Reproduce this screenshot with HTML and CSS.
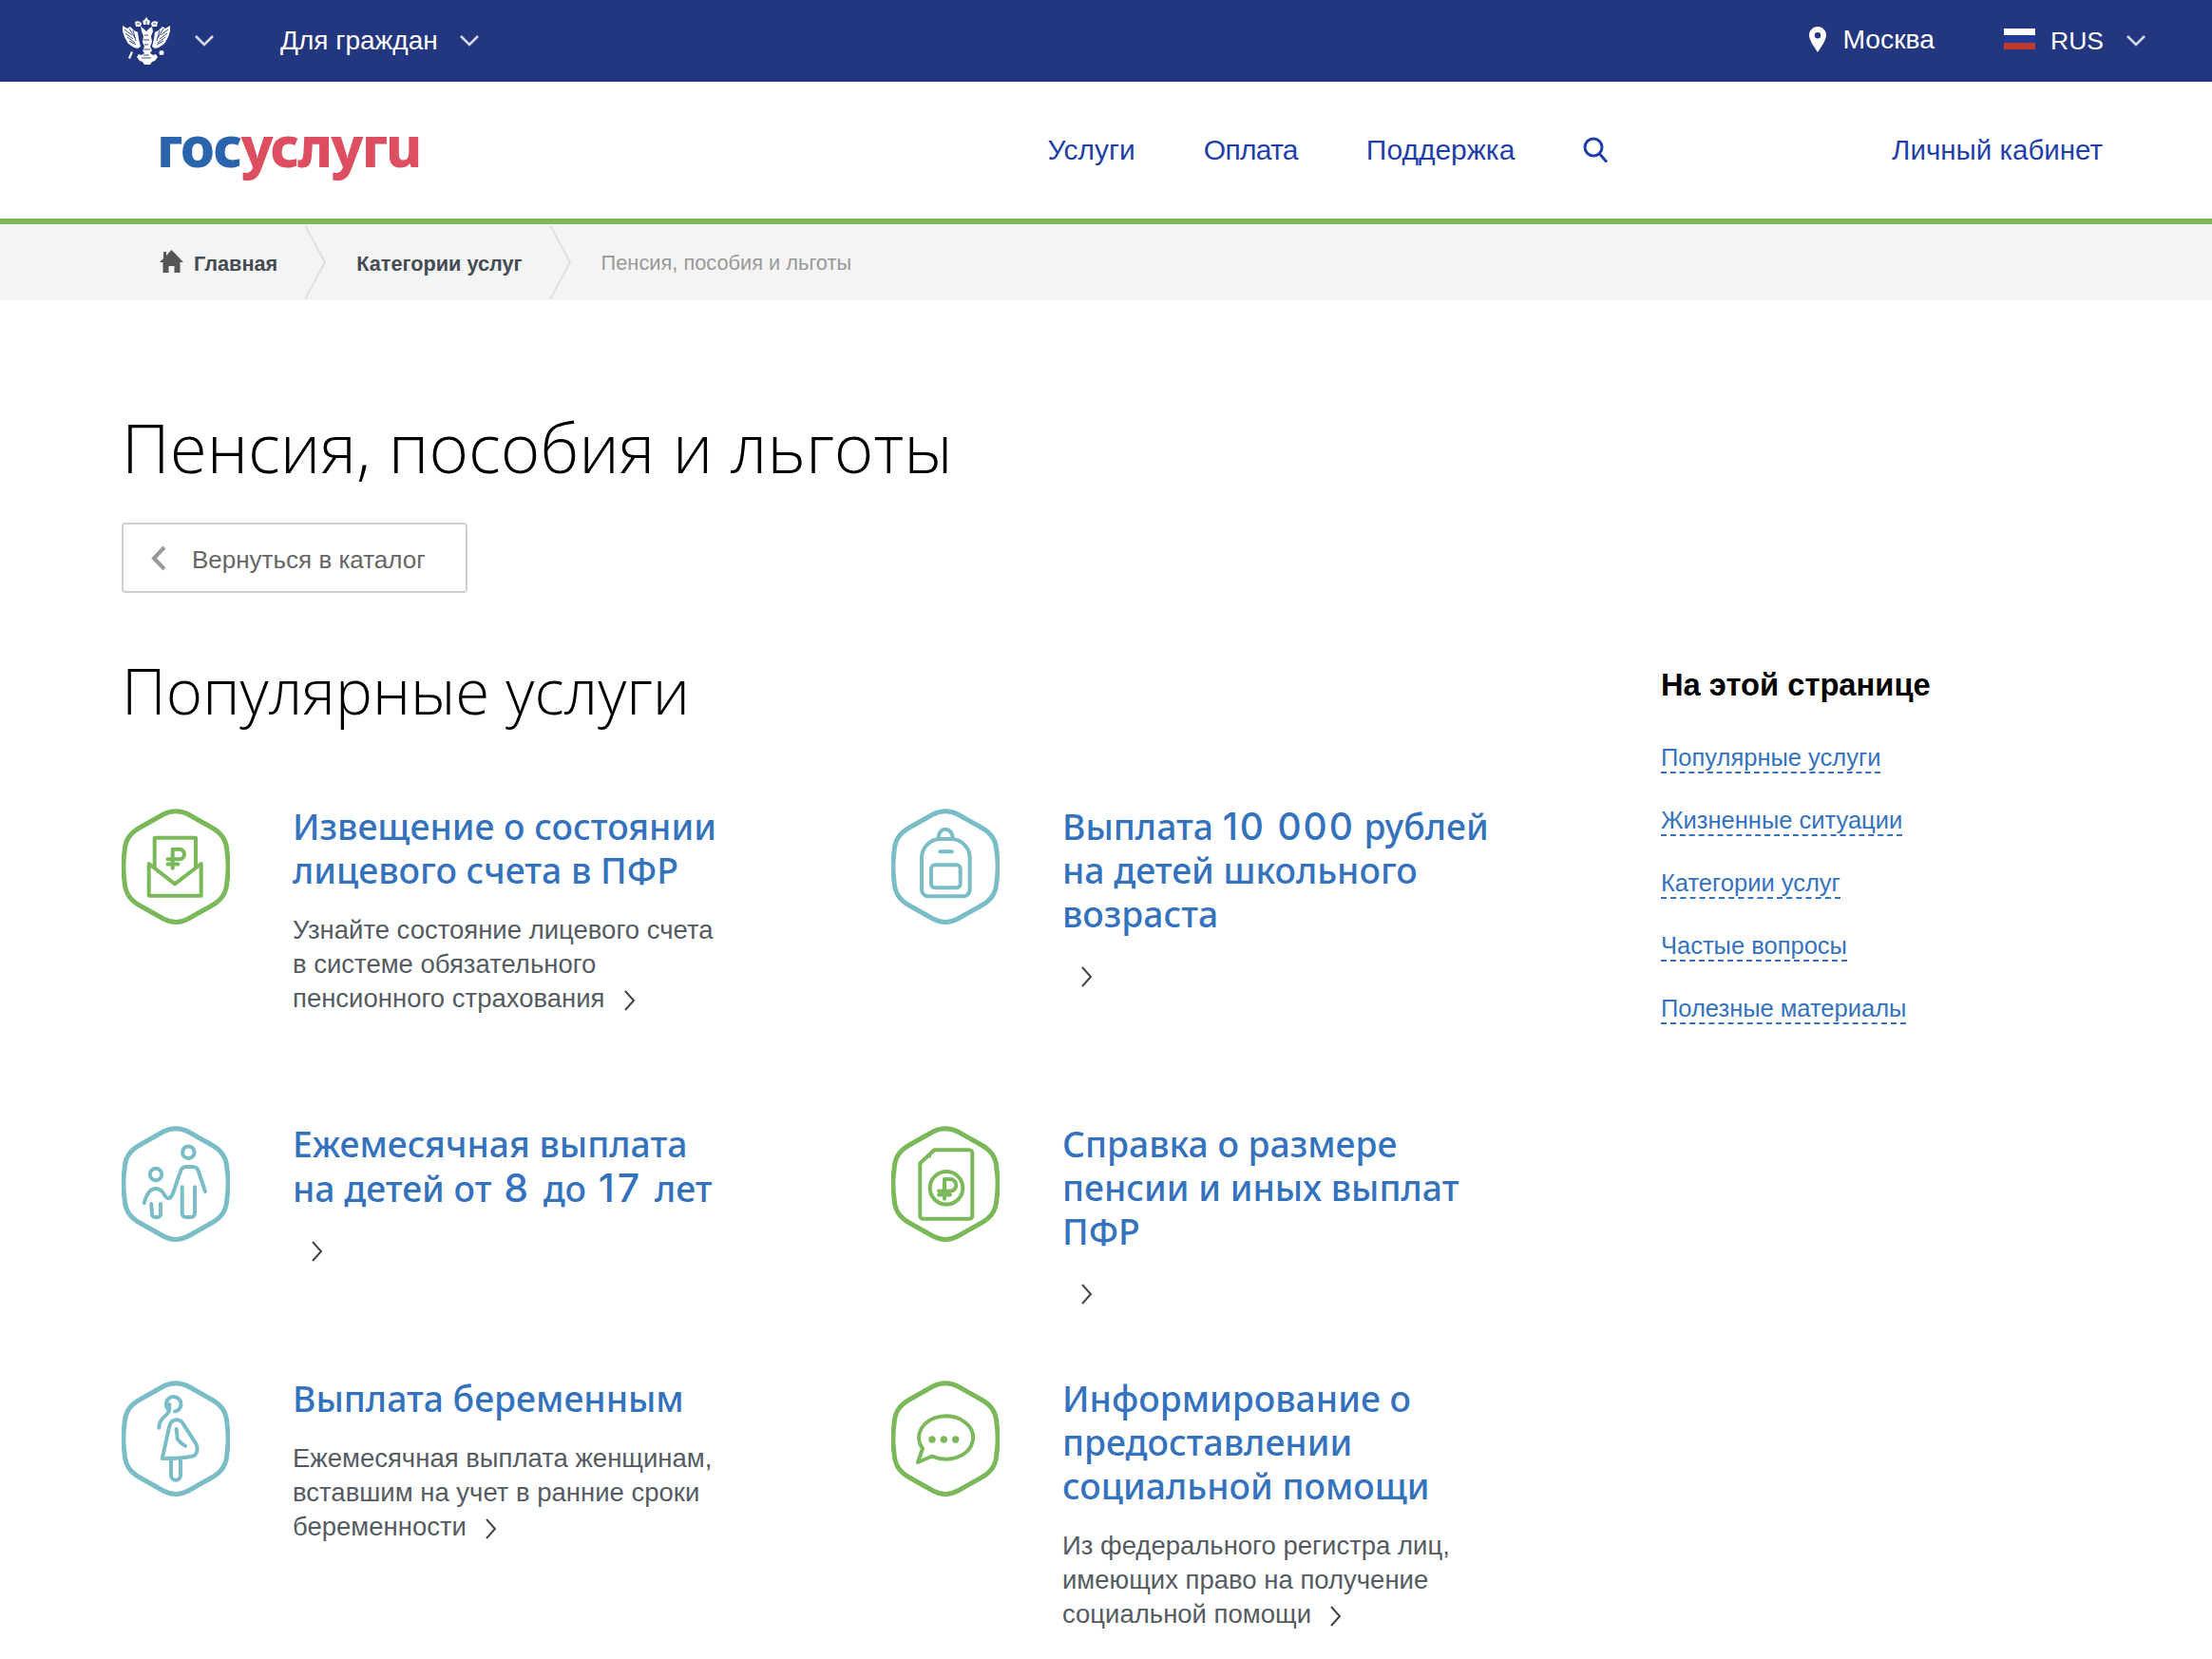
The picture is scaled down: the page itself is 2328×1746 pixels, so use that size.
FILE: index.html
```html
<!DOCTYPE html>
<html lang="ru">
<head>
<meta charset="utf-8">
<title>Пенсия, пособия и льготы</title>
<link rel="stylesheet" href="styles.css">
</head>
<body>
<svg class="defs" width="0" height="0" aria-hidden="true">
  <defs>
    <path id="hex" d="M44 6C52 1.500 62 1.500 70 6L94 19.500C106 26 110.500 34 111 46C112.500 56 112.500 66 111 76C110.500 88 106 96 94 102.500L70 116C62 120.500 52 120.500 44 116L20 102.500C8 96 3.500 88 3 76C1.500 66 1.500 56 3 46C3.500 34 8 26 20 19.500Z"/>
    <path id="chev" d="M2 2L11 12L2 22"/>
  </defs>
</svg>

<header class="topbar">
  <svg class="crest" viewBox="0 0 52 50" aria-label="Герб">
    <g fill="#fff">
      <path d="M26 0l2 3 2 1-1 4h-6l-1-4 2-1z"/>
      <path d="M14 5c3-1.500 6-.5 7 2l-1 3h-5zM38 5c-3-1.500-6-.5-7 2l1 3h5z"/>
      <path d="M1 9l5 3 3-2 4 4 4 2 1 7 2 8-3 2-4-1-6-4-4-7-2-6z"/>
      <path d="M51 9l-5 3-3-2-4 4-4 2-1 7-2 8 3 2 4-1 6-4 4-7 2-6z"/>
      <path d="M20 10l3 2 3 3 3-3 3-2 1 5-2 5 1 6-2 5 2 4-2 3 3 2 3-1 2 3-3 4-3 1-2 3h-6l-2-3-3-1-3-4 2-3 3 1 3-2-2-3 2-4-2-5 1-6-2-5z"/>
      <path d="M10 36l2 1-3 7-2-1zM42 35a2.500 2.500 0 1 1 0 5a2.500 2.500 0 1 1 0-5z"/>
    </g>
    <g fill="none" stroke="#233780" stroke-width=".9">
      <path d="M3 13l8 6M4 17l8 6M6 21l8 6M8 25l7 4M8 12l6 10M12 14l3 11"/>
      <path d="M49 13l-8 6M48 17l-8 6M46 21l-8 6M44 25l-7 4M44 12l-6 10M40 14l-3 11"/>
      <path d="M24 19h4M23 24h6M24 29h4M23 40h6M21 43h10M22 34h8"/>
      <path d="M26 4v4M16 7h3M33 7h3"/>
    </g>
  </svg>
  <svg class="chevron-down" viewBox="0 0 20 12"><path d="M1 1l9 9 9-9"/></svg>
  <a class="topbar-link citizens">Для граждан</a>
  <svg class="chevron-down" viewBox="0 0 20 12"><path d="M1 1l9 9 9-9"/></svg>
  <div class="topbar-right">
    <svg class="pin" viewBox="0 0 18 27"><path fill-rule="evenodd" d="M9 0c5 0 9 4 9 9 0 5-5 12-9 18C5 21 0 14 0 9c0-5 4-9 9-9zm0 6a3.200 3.200 0 1 0 0 6.400A3.200 3.200 0 0 0 9 6z"/></svg>
    <a class="topbar-link city">Москва</a>
    <span class="flag"><i class="flag-w"></i><i class="flag-b"></i><i class="flag-r"></i></span>
    <a class="topbar-link lang">RUS</a>
    <svg class="chevron-down" viewBox="0 0 20 12"><path d="M1 1l9 9 9-9"/></svg>
  </div>
</header>

<div class="mainhead">
  <a class="logo"><span class="logo-blue">гос</span><span class="logo-red">услугu</span></a>
  <nav class="mainnav">
    <a>Услуги</a>
    <a class="nav-pay">Оплата</a>
    <a>Поддержка</a>
    <svg class="search" viewBox="0 0 27 28"><circle cx="11" cy="11" r="9"/><path d="M17.500 18L25 26.500"/></svg>
  </nav>
  <a class="cabinet">Личный кабинет</a>
</div>

<nav class="crumbs">
  <svg class="home" viewBox="0 0 25 24"><path d="M12.500 0L25 13h-3.500v11h-6v-7h-6v7h-6V13H0L4 9V2h3v4z"/></svg>
  <a class="crumb">Главная</a>
  <svg class="crumb-sep" viewBox="0 0 24 78"><path d="M1 0l21 39L1 78"/></svg>
  <a class="crumb">Категории услуг</a>
  <svg class="crumb-sep" viewBox="0 0 24 78"><path d="M1 0l21 39L1 78"/></svg>
  <span class="crumb-current">Пенсия, пособия и льготы</span>
</nav>

<main class="page">
  <h1 class="page-title">Пенсия, пособия и льготы</h1>
  <a class="back"><svg class="back-arrow" viewBox="0 0 18 27"><path d="M15 2L4 13.500 15 25"/></svg><span>Вернуться в каталог</span></a>

  <div class="content">
    <section class="services">
      <h2 class="section-title">Популярные услуги</h2>
      <div class="cards">

        <article class="card">
          <svg class="ico green" viewBox="0 0 114 122">
            <use href="#hex"/>
            <path d="M34.700 62V30.700H78V62"/>
            <path d="M28.700 58v33.700h55V58L56 79.300z"/>
            <path d="M53.700 62.700V42.700h7a5.300 5.300 0 0 1 0 10.600H48.500M48.500 58.500h11"/>
          </svg>
          <div class="card-body">
            <h3 class="card-title">Извещение о состоянии<br>лицевого счета в ПФР</h3>
            <p class="card-text">Узнайте состояние лицевого счета<br>в системе обязательного<br>пенсионного страхования<svg class="more" viewBox="0 0 13 24"><use href="#chev"/></svg></p>
          </div>
        </article>

        <article class="card">
          <svg class="ico teal" viewBox="0 0 114 122">
            <use href="#hex"/>
            <path d="M32 85V52a20 20 0 0 1 20-20h10.700a20 20 0 0 1 20 20v33a7 7 0 0 1-7 7.300H39a7 7 0 0 1-7-7.300z"/>
            <path d="M49.300 31.700C50 25 53 21.700 57 21.700s7 3.300 8.300 10"/>
            <path d="M51.300 45.300h12.400"/>
            <rect x="42" y="59.300" width="30.700" height="24" rx="4"/>
          </svg>
          <div class="card-body">
            <h3 class="card-title">Выплата <span class="num">10 000</span> рублей<br>на детей школьного<br>возраста</h3>
            <p class="card-more"><svg class="more" viewBox="0 0 13 24"><use href="#chev"/></svg></p>
          </div>
        </article>

        <article class="card">
          <svg class="ico teal" viewBox="0 0 114 122">
            <use href="#hex"/>
            <circle cx="70.300" cy="27.700" r="6.300"/>
            <circle cx="36" cy="51" r="6.300"/>
            <path d="M23.700 81C26 72 30 66 36 66c5 0 8 4 10 8 2 3 5 3 7-1 3-6 6-18 9-25 1-4 3-5 6-5h7c3 0 5 2 6 5l7 21"/>
            <path d="M63.700 64.300V92a4 4 0 0 0 4 4h5.300a4 4 0 0 0 4-4V64.300"/>
            <path d="M31.300 82l.7 11a3 3 0 0 0 3 3h3a3 3 0 0 0 3-3V82"/>
          </svg>
          <div class="card-body">
            <h3 class="card-title">Ежемесячная выплата<br>на детей от <span class="num-short">8</span> до <span class="num-short">17</span> лет</h3>
            <p class="card-more"><svg class="more" viewBox="0 0 13 24"><use href="#chev"/></svg></p>
          </div>
        </article>

        <article class="card">
          <svg class="ico green" viewBox="0 0 114 122">
            <use href="#hex"/>
            <path d="M45.300 25.300H82a3.300 3.300 0 0 1 3.300 3.300v65.800a3.300 3.300 0 0 1-3.300 3.300H33.600a3.300 3.300 0 0 1-3.300-3.300V39.300z"/>
            <path class="solid" d="M39 33.500l3-3v3z"/>
            <circle cx="58" cy="65.300" r="17.300"/>
            <path d="M56 76.700V56h6a6.300 6.300 0 0 1 0 12.600H50M50 72.500h12"/>
          </svg>
          <div class="card-body">
            <h3 class="card-title">Справка о размере<br>пенсии и иных выплат<br>ПФР</h3>
            <p class="card-more"><svg class="more" viewBox="0 0 13 24"><use href="#chev"/></svg></p>
          </div>
        </article>

        <article class="card">
          <svg class="ico teal" viewBox="0 0 114 122">
            <use href="#hex"/>
            <path d="M50.300 31.300A7.800 7.800 0 1 1 56 32.500"/>
            <path d="M50.300 25C50.500 31 50 34 46 37c-4 3-6.500 6-6.700 12.700"/>
            <path d="M42.700 82L50.300 48c1-4 4-6.700 7.700-6.700 3.300 0 5.600 1.700 7.300 5L78 66c3.500 6 .5 13.700-4.300 13.700C63 82 52 82 42.700 82z"/>
            <path d="M52 83v16.700a5 5 0 0 0 10 0V83"/>
            <path d="M57.700 50.700l1 10.600c2 3 5 5.700 8.300 7.400"/>
          </svg>
          <div class="card-body">
            <h3 class="card-title">Выплата беременным</h3>
            <p class="card-text">Ежемесячная выплата женщинам,<br>вставшим на учет в ранние сроки<br>беременности<svg class="more" viewBox="0 0 13 24"><use href="#chev"/></svg></p>
          </div>
        </article>

        <article class="card">
          <svg class="ico green" viewBox="0 0 114 122">
            <use href="#hex"/>
            <path d="M43 79.500A28.500 22.700 0 1 0 33 71.500L28 86z"/>
            <circle class="solid" cx="43" cy="62" r="3.700"/>
            <circle class="solid" cx="55.300" cy="62" r="3.700"/>
            <circle class="solid" cx="67.700" cy="62" r="3.700"/>
          </svg>
          <div class="card-body">
            <h3 class="card-title">Информирование о<br>предоставлении<br>социальной помощи</h3>
            <p class="card-text">Из федерального регистра лиц,<br>имеющих право на получение<br>социальной помощи<svg class="more" viewBox="0 0 13 24"><use href="#chev"/></svg></p>
          </div>
        </article>

      </div>
    </section>

    <aside class="toc">
      <h4 class="toc-title">На этой странице</h4>
      <a class="toc-link">Популярные услуги</a>
      <a class="toc-link">Жизненные ситуации</a>
      <a class="toc-link">Категории услуг</a>
      <a class="toc-link">Частые вопросы</a>
      <a class="toc-link">Полезные материалы</a>
    </aside>
  </div>
</main>
</body>
</html>
```

FILE: styles.css
```css
* { box-sizing: border-box; }
html, body { margin: 0; padding: 0; }
body {
  width: 2328px;
  height: 1746px;
  overflow: hidden;
  background: #fff;
  font-family: "Liberation Sans", Arial, sans-serif;
  color: #000;
}
.defs { position: absolute; }

.topbar {
  height: 86px;
  background: #233780;
  display: flex;
  align-items: center;
  padding: 0 70px 0 128px;
}
.crest { width: 52px; height: 50px; flex: none; margin-right: 25px; }
.chevron-down { width: 20px; height: 12px; flex: none; }
.chevron-down path { fill: none; stroke: #d5daea; stroke-width: 2.500; }
.topbar-link { color: #fff; font-size: 28px; }
.citizens { margin-left: 70px; margin-right: 23px; }
.topbar-right { margin-left: auto; display: flex; align-items: center; }
.pin { width: 18px; height: 27px; fill: #fff; margin-right: 17px; margin-top: -4px; }
.city { margin-right: 73px; margin-top: -4px; font-size: 28.300px; }
.flag { width: 33px; height: 22px; display: flex; flex-direction: column; margin-right: 16px; margin-top: -4px; }
.flag i { flex: 1; display: block; }
.flag-w { background: #fff; }
.flag-b { background: #1f3b9c; }
.flag-r { background: #c23b2a; }
.lang { margin-right: 24px; font-size: 26.500px; }

.mainhead {
  height: 144px;
  display: flex;
  align-items: center;
  padding: 0 115px 0 165px;
}
.logo {
  font-family: "Noto Sans", sans-serif;
  font-weight: 800;
  font-size: 58px;
  letter-spacing: -1.700px;
  line-height: 1;
  white-space: nowrap;
  margin-top: -8px;
}
.logo-blue { color: #2a64ad; }
.logo-red { color: #dd4f60; }
.mainnav { margin-left: 660px; display: flex; align-items: center; gap: 72px; }
.mainnav a { color: #1f3fa8; font-size: 30px; }
.mainnav .nav-pay { letter-spacing: -.7px; }
.search { width: 27px; height: 28px; fill: none; stroke: #1f3fa8; stroke-width: 3; }
.cabinet { margin-left: auto; color: #1f3fa8; font-size: 29.500px; }

.crumbs {
  height: 86px;
  background: #f4f4f4;
  border-top: 6px solid #7ab85a;
  display: flex;
  align-items: center;
  padding-left: 168px;
}
.home { width: 25px; height: 24px; fill: #555; margin-right: 11px; margin-top: -3px; }
.crumb { font-size: 21.700px; font-weight: 700; color: #444b52; margin-top: 3px; }
.crumb-sep { width: 24px; height: 78px; fill: none; stroke: #dfdfdf; stroke-width: 2; margin: 0 31px 0 28px; flex: none; }
.crumb-current { font-size: 21.800px; color: #999; margin-top: 1px; }

.page { padding: 0 80px 0 128px; }
.page-title {
  font-family: "Open Sans", sans-serif;
  font-weight: 300;
  font-size: 71px;
  line-height: 90px;
  margin: 110px 0 0;
  color: #000;
}
.back {
  width: 364px;
  height: 74px;
  margin-top: 34px;
  border: 2px solid #ccd1d6;
  border-radius: 4px;
  display: flex;
  align-items: center;
  padding-left: 28px;
  color: #666;
  font-size: 26px;
}
.back span { margin-top: 4px; }
.back-arrow { width: 18px; height: 27px; fill: none; stroke: #999; stroke-width: 4; margin-right: 26px; flex: none; }

.content { display: flex; }
.services { width: 1620px; flex: none; }
.section-title {
  font-family: "Open Sans", sans-serif;
  font-weight: 300;
  font-size: 65.500px;
  line-height: 80px;
  margin: 63px 0 0;
}
.cards {
  margin-top: 80px;
  display: grid;
  grid-template-columns: 810px 682px;
  grid-template-rows: 334px 268px auto;
}
.card { display: flex; align-items: flex-start; }
.ico { width: 114px; height: 122px; flex: none; margin: 4px 66px 0 0; fill: none; stroke-width: 4; stroke-linecap: round; stroke-linejoin: round; }
.ico use { stroke-width: 5; }
.green { stroke: #7ab85a; }
.teal { stroke: #7bbdc6; }
.green .solid { fill: #7ab85a; stroke: none; }
.card-title {
  font-family: "Noto Sans", sans-serif;
  font-weight: 500;
  font-size: 37.300px;
  line-height: 46px;
  margin: 0;
  color: #3572bd;
  white-space: nowrap;
}
.num { font-family: "Inter", sans-serif; font-size: 39px; letter-spacing: 2px; }
.num-short { font-family: "Inter", sans-serif; font-size: 41px; letter-spacing: 3px; margin: 0 3px; }
.card-text {
  font-size: 27.500px;
  line-height: 36px;
  margin: 22px 0 0;
  color: #555b62;
  white-space: nowrap;
}
.card-more { margin: 27px 0 0; height: 36px; line-height: 36px; }
.more { width: 13px; height: 24px; fill: none; stroke: #444; stroke-width: 2; margin-left: 19px; vertical-align: -5px; }

.toc { display: flex; flex-direction: column; align-items: flex-start; }
.toc-title { font-size: 32.700px; font-weight: 700; margin: 78px 0 42px; }
.toc-link {
  color: #3572bd;
  font-size: 25.500px;
  line-height: 30px;
  margin-bottom: 34px;
  border-bottom: 2px dashed #3572bd;
}
```
